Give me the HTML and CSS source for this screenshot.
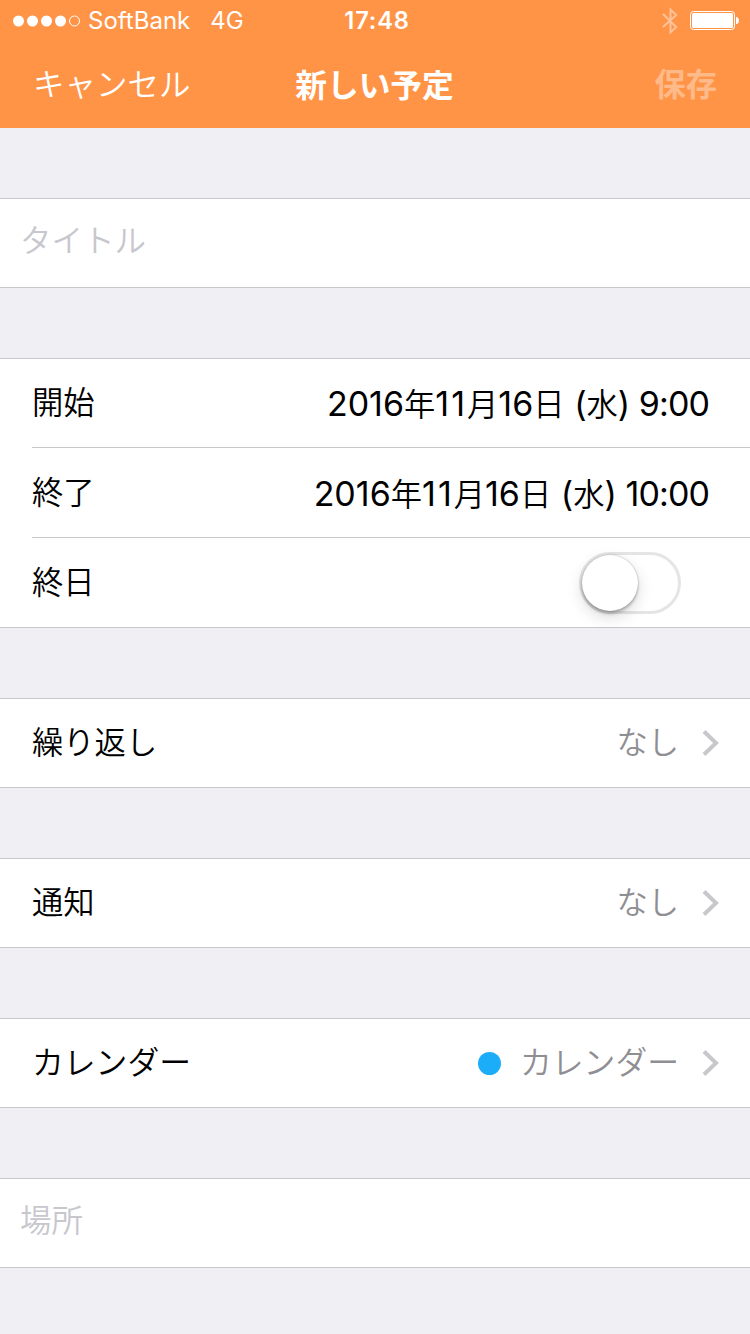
FILE: index.html
```html
<!DOCTYPE html>
<html lang="ja">
<head>
<meta charset="utf-8">
<title>新しい予定</title>
<link rel="stylesheet" href="styles.css">
</head>
<body>
<header class="header">
  <div class="status">
    <div class="carrier">
      <svg class="signal" width="68" height="12" viewBox="0 0 68 12"><g fill="#fff"><circle cx="5.500" cy="6" r="5.500"/><circle cx="19.500" cy="6" r="5.500"/><circle cx="33.500" cy="6" r="5.500"/><circle cx="47.500" cy="6" r="5.500"/></g><circle cx="61.500" cy="6" r="5" fill="none" stroke="#fff"/></svg>
      <span class="operator">SoftBank</span>
      <span class="network">4G</span>
    </div>
    <div class="clock">17:48</div>
    <div class="indicators">
      <svg width="18" height="28" viewBox="0 0 18 28"><path d="M2 7 15.200 20 9.500 25.500V2.500L15.200 8 2 20" fill="none" stroke="#ffc298" stroke-width="2"/></svg>
      <svg class="battery" width="49" height="19" viewBox="0 0 49 19"><rect x=".5" y=".5" width="44" height="18" rx="3" fill="none" stroke="#fff"/><rect x="2" y="2" width="41" height="15" rx="1.500" fill="#fff"/><path d="M46 6h1q2 1 2 3.500T47 13h-1z" fill="#fff"/></svg>
    </div>
  </div>
  <nav class="nav">
    <span class="cancel">キャンセル</span>
    <span class="heading">新しい予定</span>
    <span class="save">保存</span>
  </nav>
</header>
<main class="form">
  <section class="group">
    <div class="row row-input"><span class="placeholder">タイトル</span></div>
  </section>
  <section class="group">
    <div class="row row-first"><span class="label">開始</span><span class="date"><b>2016</b>年<b class="month">11</b>月<b>16</b>日<b> (</b>水<b>) </b><b class="time">9:00</b></span></div>
    <div class="row row-inner"><span class="label">終了</span><span class="date"><b>2016</b>年<b class="month">11</b>月<b>16</b>日<b> (</b>水<b>) </b><b class="time">10:00</b></span></div>
    <div class="row row-inner"><span class="label">終日</span><span class="switch"><span class="knob"></span></span></div>
  </section>
  <section class="group">
    <div class="row"><span class="label">繰り返し</span><span class="value">なし</span><svg class="chevron" width="17" height="26" viewBox="0 0 17 26"><path d="M2 1.500 14 13 2 24.500" fill="none" stroke="#c7c7cc" stroke-width="4"/></svg></div>
  </section>
  <section class="group">
    <div class="row"><span class="label">通知</span><span class="value">なし</span><svg class="chevron" width="17" height="26" viewBox="0 0 17 26"><path d="M2 1.500 14 13 2 24.500" fill="none" stroke="#c7c7cc" stroke-width="4"/></svg></div>
  </section>
  <section class="group">
    <div class="row"><span class="label label-kana">カレンダー</span><i class="dot"></i><span class="value value-calendar">カレンダー</span><svg class="chevron" width="17" height="26" viewBox="0 0 17 26"><path d="M2 1.500 14 13 2 24.500" fill="none" stroke="#c7c7cc" stroke-width="4"/></svg></div>
  </section>
  <section class="group">
    <div class="row row-input"><span class="placeholder">場所</span></div>
  </section>
</main>
</body>
</html>
```
FILE: styles.css
```css
* { box-sizing: border-box; }
body {
  margin: 0;
  height: 1334px;
  overflow: hidden;
  background: #efeff4;
  color: #000;
  font-family: "Noto Sans CJK JP", sans-serif;
  font-size: 31.3px;
  font-weight: 350;
  line-height: 40px;
  white-space: nowrap;
}
.header { height: 128px; background: #ff9447; color: #fff; }
.status {
  display: grid;
  grid-template-columns: 1fr auto 1fr;
  align-items: center;
  height: 40px;
  padding: 0 11px 0 13px;
  font-family: Inter, sans-serif;
  font-size: 24px;
  font-weight: 400;
}
.carrier { display: flex; align-items: center; height: 40px; }
.operator, .network, .clock { padding-top: 1px; }
.operator { margin-left: 7px; }
.network { margin-left: 20px; }
.clock { font-weight: 600; font-size: 23.7px; letter-spacing: .8px; padding-left: 2px; }
.indicators { display: flex; justify-content: flex-end; align-items: center; gap: 11px; height: 38px; }
.nav {
  display: grid;
  grid-template-columns: 1fr auto 1fr;
  align-items: center;
  height: 88px;
  padding: 0 33px 3px 33px;
}
.cancel { padding-bottom: 1px; font-size: 31.5px; }
.heading { margin-left: -1px; font-weight: 700; font-size: 31.7px; }
.save { justify-self: end; color: #ffba8a; font-weight: 600; }
.form { display: flex; flex-direction: column; gap: 70px; padding-top: 70px; }
.group { background: #fff; border: solid #c8c7cc; border-width: 1px 0; }
.row { display: flex; align-items: center; justify-content: space-between; height: 88px; padding: 0 31px 0 32px; }
.row-input { padding: 0 20px 10px; }
.placeholder { color: #c7c7cd; font-size: 31.5px; }
.row-first { padding-right: 41px; }
.row-inner {
  height: 90px;
  margin-left: 32px;
  padding: 0 41px 0 0;
  border-top: 1px solid #c8c7cc;
}
.label { padding-bottom: 4px; }
.row-inner .label { padding-bottom: 3px; }
.label-kana { padding-bottom: 6px; font-size: 31.8px; }
.date b { font-family: Inter, sans-serif; font-size: 34px; font-weight: 400; white-space: pre; }
.date .month { letter-spacing: 2px; }
.date .time { letter-spacing: -.9px; margin-left: -1px; }
.row-inner .date { padding-top: 1px; }
.value { padding-bottom: 5px; margin-left: auto; color: #8e8e93; }
.value-calendar { padding-bottom: 6px; margin-left: 19px; font-size: 31.8px; }
.chevron { margin-left: 23px; }
.dot { width: 23px; height: 23px; margin-left: auto; border-radius: 50%; background: #1badf8; }
.switch { width: 102px; height: 62px; margin-right: 28px; border: 3px solid #e5e5e5; border-radius: 31px; }
.knob { display: block; width: 56px; height: 56px; border-radius: 50%; background: #fff; box-shadow: 0 6px 16px rgba(0,0,0,.15), 0 3px 3px rgba(0,0,0,.2), 0 0 2px rgba(0,0,0,.3); }
```
